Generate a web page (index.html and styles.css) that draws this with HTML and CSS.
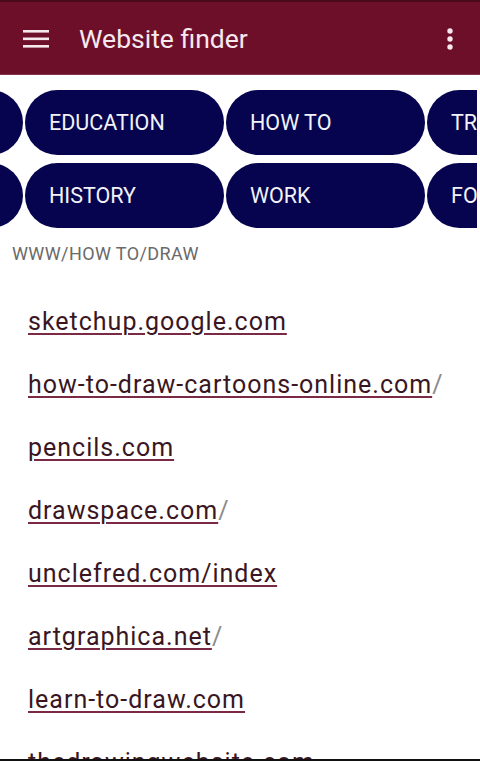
FILE: index.html
```html
<!DOCTYPE html>
<html lang="en">
<head>
<meta charset="utf-8">
<title>Website finder</title>
<link rel="stylesheet" href="styles.css">
</head>
<body>
<div class="screen">
  <header class="appbar">
    <svg class="icon menu" width="26" height="20" viewBox="0 0 26 20">
      <rect x="0" y="1" width="26" height="2.6" fill="#f6e9ee"/>
      <rect x="0" y="8.5" width="26" height="2.6" fill="#f6e9ee"/>
      <rect x="0" y="16" width="26" height="2.6" fill="#f6e9ee"/>
    </svg>
    <h1 class="title">Website finder</h1>
    <svg class="icon more" width="8" height="24" viewBox="0 0 8 24">
      <circle cx="4" cy="4" r="2.7" fill="#f6e9ee"/>
      <circle cx="4" cy="12" r="2.7" fill="#f6e9ee"/>
      <circle cx="4" cy="20" r="2.7" fill="#f6e9ee"/>
    </svg>
  </header>

  <section class="chips">
    <div class="chip-row">
      <span class="chip">SCIENCE</span>
      <span class="chip">EDUCATION</span>
      <span class="chip">HOW TO</span>
      <span class="chip">TRAVEL</span>
    </div>
    <div class="chip-row">
      <span class="chip">SPORTS</span>
      <span class="chip">HISTORY</span>
      <span class="chip">WORK</span>
      <span class="chip">FOOD</span>
    </div>
  </section>

  <div class="crumb">WWW/HOW TO/DRAW</div>

  <ul class="links">
    <li><a class="link">sketchup.google.com</a></li>
    <li><a class="link">how-to-draw-cartoons-online.com</a><span class="slash">/</span></li>
    <li><a class="link">pencils.com</a></li>
    <li><a class="link">drawspace.com</a><span class="slash">/</span></li>
    <li><a class="link">unclefred.com/index</a></li>
    <li><a class="link">artgraphica.net</a><span class="slash">/</span></li>
    <li><a class="link">learn-to-draw.com</a></li>
    <li><a class="link">thedrawingwebsite.com</a></li>
  </ul>
</div>
</body>
</html>
```

FILE: styles.css
```css
* { box-sizing: border-box; }

html, body {
  margin: 0;
  padding: 0;
  background: #ffffff;
}

body {
  font-family: Roboto, "Liberation Sans", sans-serif;
  width: 480px;
  height: 761px;
  overflow: hidden;
}

.screen {
  position: relative;
  width: 480px;
  height: 761px;
  overflow: hidden;
  border-bottom: 2px solid #111111;
}

.appbar {
  height: 75px;
  background: #6e0f2a;
  border-top: 2px solid #4a0a1c;
  border-bottom: 1px solid #8a3550;
  display: flex;
  align-items: center;
  padding: 0 0 0 23px;
}

.icon { display: block; flex-shrink: 0; }

.menu { margin-top: 2px; }

.title {
  margin: 0 0 0 30px;
  font-size: 26.5px;
  font-weight: 400;
  color: #f6e9ee;
  flex: 1;
}

.more {
  margin-right: 26px;
  margin-top: 2px;
}

.chips {
  margin-top: 15px;
  width: 477px;
  overflow: hidden;
  display: flex;
  flex-direction: column;
  gap: 8px;
}

.chip-row {
  display: flex;
  gap: 2px;
  margin-left: -176px;
}

.chip {
  flex-shrink: 0;
  width: 199px;
  height: 65px;
  border-radius: 33px;
  background: #06044f;
  color: #f2f2f8;
  font-size: 21.5px;
  display: flex;
  align-items: center;
  padding-left: 24px;
  white-space: nowrap;
  overflow: hidden;
}

.crumb {
  margin-top: 16px;
  padding-left: 12px;
  font-size: 18px;
  letter-spacing: 0.4px;
  line-height: 20px;
  color: #6a6a6a;
}

.links {
  list-style: none;
  margin: 26px 0 0 0;
  padding: 0 0 0 28px;
}

.links li {
  font-size: 25px;
  letter-spacing: 1px;
  line-height: 63px;
  white-space: nowrap;
}

.link {
  color: #3a1622;
  text-decoration: underline;
  text-decoration-color: #7a2a44;
  text-decoration-thickness: 1.5px;
  text-underline-offset: 3px;
}

.slash {
  color: #8a8a8a;
}
```
